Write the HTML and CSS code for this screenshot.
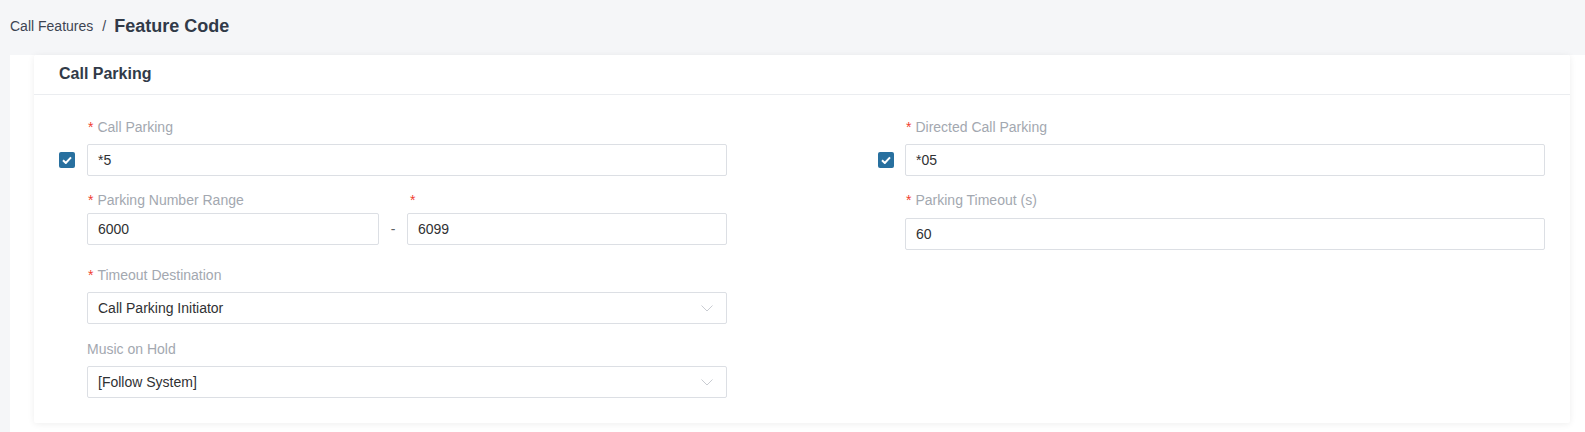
FILE: index.html
```html
<!DOCTYPE html>
<html lang="en">
<head>
  <meta charset="UTF-8">
  <title>Feature Code</title>
  <link rel="stylesheet" href="styles.css">
</head>
<body>
  <!-- Breadcrumb -->
  <div class="breadcrumb">
    <span class="crumb">Call Features</span>
    <span class="sep">/</span>
    <span class="current">Feature Code</span>
  </div>

  <div class="painel">
    <div class="card">
      <div class="card-header">Call Parking</div>
      <div class="card-body">

        <!-- Coluna esquerda -->
        <div class="coluna">
          <div class="item">
            <div class="rotulo"><span class="obrig">*</span>Call Parking</div>
            <div class="linha">
              <span class="check"><svg width="10" height="8" viewBox="0 0 10 8"><path d="M1 4.2 L3.8 7 L9 1.4" fill="none" stroke="#fff" stroke-width="2"/></svg></span>
              <div class="campo">*5</div>
            </div>
          </div>

          <div class="item item-faixa">
            <div class="faixa">
              <div>
                <div class="rotulo"><span class="obrig">*</span>Parking Number Range</div>
                <div class="campo">6000</div>
              </div>
              <div class="traco">-</div>
              <div>
                <div class="rotulo rotulo-so"><span class="obrig">*</span></div>
                <div class="campo">6099</div>
              </div>
            </div>
          </div>

          <div class="item item-destino">
            <div class="rotulo"><span class="obrig">*</span>Timeout Destination</div>
            <div class="campo select">Call Parking Initiator
              <svg class="seta" width="12" height="7" viewBox="0 0 12 7"><path d="M0.5 0.5 L6 6 L11.5 0.5" fill="none" stroke="#c9ccd2" stroke-width="1"/></svg>
            </div>
          </div>

          <div class="item item-musica">
            <div class="rotulo">Music on Hold</div>
            <div class="campo select">[Follow System]
              <svg class="seta" width="12" height="7" viewBox="0 0 12 7"><path d="M0.5 0.5 L6 6 L11.5 0.5" fill="none" stroke="#c9ccd2" stroke-width="1"/></svg>
            </div>
          </div>
        </div>

        <!-- Coluna direita -->
        <div class="coluna coluna-dir">
          <div class="item">
            <div class="rotulo"><span class="obrig">*</span>Directed Call Parking</div>
            <div class="linha">
              <span class="check"><svg width="10" height="8" viewBox="0 0 10 8"><path d="M1 4.2 L3.8 7 L9 1.4" fill="none" stroke="#fff" stroke-width="2"/></svg></span>
              <div class="campo">*05</div>
            </div>
          </div>

          <div class="item item-timeout">
            <div class="rotulo"><span class="obrig">*</span>Parking Timeout (s)</div>
            <div class="campo">60</div>
          </div>
        </div>

      </div>
    </div>
  </div>
</body>
</html>
```

FILE: styles.css
```css
body, html {
  margin: 0;
  padding: 0;
  font-family: 'Liberation Sans', Arial, sans-serif;
  background-color: #f5f6f8;
  color: #303133;
  overflow: hidden;
  height: 100%;
}

/* Breadcrumb */
.breadcrumb {
  height: 55px;
  padding: 0 10px 3px;
  display: flex;
  align-items: center;
  box-sizing: border-box;
}

.crumb {
  font-size: 14px;
  color: #3d4452;
}

.sep {
  font-size: 14px;
  color: #3d4452;
  margin: 0 8px 0 9px;
}

.current {
  font-size: 18px;
  font-weight: bold;
  color: #313a48;
}

/* Painel e card */
.painel {
  margin-left: 10px;
  background: #fff;
  padding: 0 15px 0 24px;
  height: calc(100% - 55px);
  box-sizing: border-box;
}

.card {
  background: #fff;
  border-radius: 2px;
  box-shadow: 0 1px 7px rgba(0, 0, 0, 0.07);
}

.card-header {
  height: 39px;
  line-height: 38px;
  padding-left: 25px;
  font-size: 16px;
  font-weight: bold;
  color: #313a48;
  border-bottom: 1px solid #ebedf0;
}

.card-body {
  display: flex;
  justify-content: space-between;
  padding: 21px 25px 25px;
}

.coluna {
  width: 668px;
}

.coluna-dir {
  width: 667px;
}

/* Itens do formulario */
.item {
  padding-left: 28px;
}

.coluna-dir .item {
  padding-left: 27px;
}

.rotulo {
  height: 22px;
  line-height: 22px;
  font-size: 14px;
  color: #a3a8b0;
  margin-bottom: 6px;
}

.rotulo-so {
  padding-left: 2px;
}

.obrig {
  color: #f0412f;
  margin: 0 4px 0 1px;
}

.linha {
  display: flex;
  align-items: center;
  margin-left: -28px;
}

.coluna-dir .linha {
  margin-left: -27px;
}

.check {
  width: 16px;
  height: 16px;
  border-radius: 2px;
  background: #28709f;
  display: flex;
  justify-content: center;
  align-items: center;
  margin-right: 12px;
}

.coluna-dir .check {
  margin-right: 11px;
}

.campo {
  position: relative;
  flex: 1;
  height: 32px;
  line-height: 30px;
  box-sizing: border-box;
  border: 1px solid #dcdfe4;
  border-radius: 2px;
  padding: 0 10px;
  font-size: 14px;
  color: #303133;
  background: #fff;
}

.select {
  padding-right: 30px;
}

.seta {
  position: absolute;
  right: 13px;
  top: 12px;
}

.item-faixa {
  margin-top: 13px;
}

.item-faixa .rotulo {
  margin-bottom: 2px;
}

.faixa {
  display: grid;
  grid-template-columns: 292px 28px 320px;
}

.traco {
  padding-top: 24px;
  line-height: 32px;
  text-align: center;
  font-size: 14px;
  color: #606266;
}

.item-destino {
  margin-top: 19px;
}

.item-musica {
  margin-top: 14px;
}

.item-timeout {
  margin-top: 13px;
}

.item-timeout .rotulo {
  margin-bottom: 7px;
}
```
